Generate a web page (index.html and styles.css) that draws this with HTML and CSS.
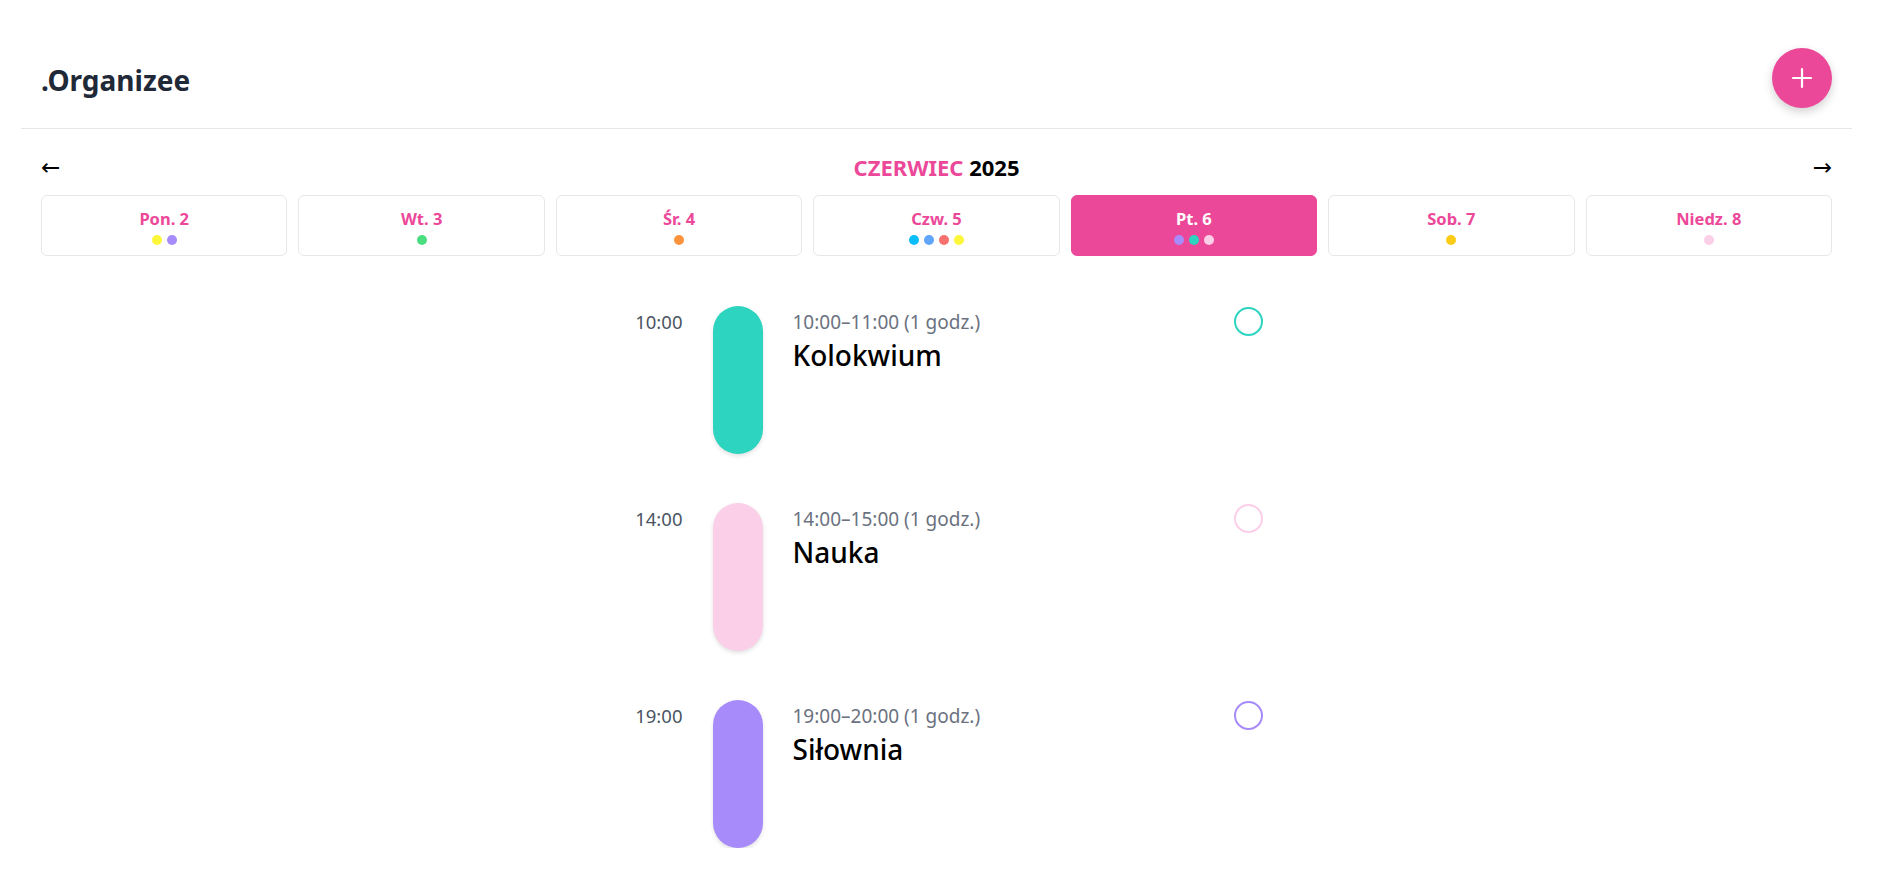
FILE: index.html
```html
<!DOCTYPE html>
<html lang="pl">
<head>
<meta charset="utf-8">
<title>Organizee</title>
<link rel="stylesheet" href="styles.css">
</head>
<body>
<div class="app">
  <header class="topbar">
    <h1 class="logo">.Organizee</h1>
    <button class="add-btn" aria-label="Dodaj">
      <svg width="22" height="22" viewBox="0 0 22 22"><path d="M11 2v18M2 11h18" stroke="#fff" stroke-width="2.2" stroke-linecap="round"/></svg>
    </button>
  </header>

  <main class="main">
    <div class="month-nav">
      <span class="arrow">←</span>
      <div class="month"><span class="month-name">CZERWIEC</span> <span class="year">2025</span></div>
      <span class="arrow">→</span>
    </div>

    <div class="days">
      <div class="day"><div class="day-label">Pon. 2</div><div class="dots"><i class="dot c-yellow"></i><i class="dot c-violet"></i></div></div>
      <div class="day"><div class="day-label">Wt. 3</div><div class="dots"><i class="dot c-green"></i></div></div>
      <div class="day"><div class="day-label">Śr. 4</div><div class="dots"><i class="dot c-orange"></i></div></div>
      <div class="day"><div class="day-label">Czw. 5</div><div class="dots"><i class="dot c-sky"></i><i class="dot c-blue"></i><i class="dot c-red"></i><i class="dot c-yellow"></i></div></div>
      <div class="day active"><div class="day-label">Pt. 6</div><div class="dots"><i class="dot c-violet"></i><i class="dot c-teal"></i><i class="dot c-pink"></i></div></div>
      <div class="day"><div class="day-label">Sob. 7</div><div class="dots"><i class="dot c-amber"></i></div></div>
      <div class="day"><div class="day-label">Niedz. 8</div><div class="dots"><i class="dot c-pink"></i></div></div>
    </div>

    <div class="events">
      <div class="event">
        <div class="ev-time">10:00</div>
        <div class="ev-bar bg-teal"></div>
        <div class="ev-body">
          <div class="ev-range">10:00–11:00 (1 godz.)</div>
          <div class="ev-title">Kolokwium</div>
        </div>
        <div class="ev-check bd-teal"></div>
      </div>
      <div class="event">
        <div class="ev-time">14:00</div>
        <div class="ev-bar bg-pink"></div>
        <div class="ev-body">
          <div class="ev-range">14:00–15:00 (1 godz.)</div>
          <div class="ev-title">Nauka</div>
        </div>
        <div class="ev-check bd-pink"></div>
      </div>
      <div class="event">
        <div class="ev-time">19:00</div>
        <div class="ev-bar bg-violet"></div>
        <div class="ev-body">
          <div class="ev-range">19:00–20:00 (1 godz.)</div>
          <div class="ev-title">Siłownia</div>
        </div>
        <div class="ev-check bd-violet"></div>
      </div>
    </div>
  </main>
</div>
</body>
</html>
```

FILE: styles.css
```css
* { box-sizing: border-box; }

html, body {
  margin: 0;
  padding: 0;
  background: #ffffff;
}

body {
  font-family: "Noto Sans", "Open Sans", sans-serif;
  color: #000;
}

.app {
  padding: 0 26px 0 21px;
}

.topbar {
  display: flex;
  align-items: center;
  justify-content: space-between;
  padding: 48px 20px 20px 20px;
  border-bottom: 1px solid #e5e7eb;
}

.logo {
  margin: 0;
  font-size: 28px;
  font-weight: 700;
  color: #1f2937;
  line-height: 1;
  margin-top: 3px;
}

.add-btn {
  width: 60px;
  height: 60px;
  border-radius: 50%;
  border: none;
  background: #ec4899;
  box-shadow: 0 4px 10px rgba(0, 0, 0, 0.18);
  display: flex;
  align-items: center;
  justify-content: center;
  padding: 0;
  cursor: pointer;
}

.main {
  padding: 0 20px;
}

.month-nav {
  display: flex;
  align-items: center;
  justify-content: space-between;
  margin-top: 26px;
  height: 24px;
}

.arrow {
  font-size: 23px;
  line-height: 1;
  color: #000;
  font-family: "DejaVu Sans", sans-serif;
}

.month {
  font-size: 22px;
  font-weight: 700;
  line-height: 24px;
}

.month-name { color: #ec4899; }
.year { color: #000; }

.days {
  display: grid;
  grid-template-columns: repeat(7, 1fr);
  gap: 11px;
  margin-top: 16px;
}

.day {
  height: 61px;
  border: 1px solid #e5e7eb;
  border-radius: 6px;
  display: flex;
  flex-direction: column;
  align-items: center;
  padding-top: 12px;
  background: #fff;
}

.day-label {
  font-size: 16.5px;
  font-weight: 700;
  color: #ec4899;
  line-height: 22px;
}

.day.active {
  background: #ec4899;
  border-color: #ec4899;
}

.day.active .day-label { color: #fff; }

.dots {
  display: flex;
  gap: 5px;
  margin-top: 5px;
}

.dot {
  width: 10px;
  height: 10px;
  border-radius: 50%;
  display: block;
}

.c-yellow { background: #fdf73a; }
.c-violet { background: #a78bfa; }
.c-green { background: #4ade80; }
.c-orange { background: #fb923c; }
.c-sky { background: #0abdfd; }
.c-blue { background: #60a5fa; }
.c-red { background: #f87171; }
.c-teal { background: #2dd4bf; }
.c-pink { background: #fbcfe8; }
.c-amber { background: #facc15; }

.events {
  width: 652px;
  margin: 50px auto 0 auto;
  display: flex;
  flex-direction: column;
  gap: 49px;
}

.event {
  display: grid;
  grid-template-columns: 72px 50px 1fr 29px;
  column-gap: 30px;
  align-items: start;
}

.ev-time {
  text-align: right;
  font-size: 18.5px;
  color: #4b5563;
  line-height: 24px;
  margin-top: 4px;
}

.ev-bar {
  width: 50px;
  height: 148px;
  border-radius: 25px;
  box-shadow: 0 2px 4px rgba(0, 0, 0, 0.12);
}

.bg-teal { background: #2dd4bf; }
.bg-pink { background: #fbcfe8; }
.bg-violet { background: #a78bfa; }

.ev-body {
  padding-top: 4px;
}

.ev-range {
  font-size: 19px;
  color: #6b7280;
  line-height: 24px;
}

.ev-title {
  font-size: 28px;
  font-weight: 500;
  line-height: 36px;
  margin-top: 3px;
  color: #000;
}

.ev-check {
  width: 29px;
  height: 29px;
  border-radius: 50%;
  border: 2px solid;
  margin-top: 1px;
}

.bd-teal { border-color: #2dd4bf; }
.bd-pink { border-color: #fbcfe8; }
.bd-violet { border-color: #a78bfa; }
```
